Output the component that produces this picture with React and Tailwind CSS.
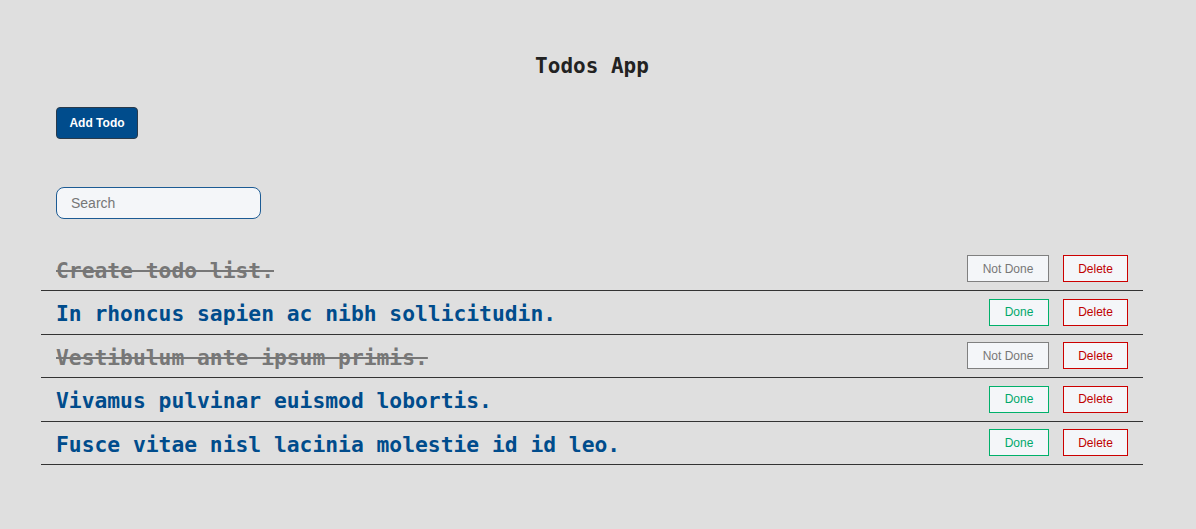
import React, { useState } from 'react';

const initialTodos = [
  { id: 1, text: 'Create todo list.', done: true },
  { id: 2, text: 'In rhoncus sapien ac nibh sollicitudin.', done: false },
  { id: 3, text: 'Vestibulum ante ipsum primis.', done: true },
  { id: 4, text: 'Vivamus pulvinar euismod lobortis.', done: false },
  { id: 5, text: 'Fusce vitae nisl lacinia molestie id id leo.', done: false },
];

const mono = { fontFamily: '"DejaVu Sans Mono", monospace' };
const sans = { fontFamily: '"Liberation Sans", Arial, sans-serif' };

const App = () => {
  const [todos, setTodos] = useState(initialTodos);
  const [search, setSearch] = useState('');

  const toggle = (id) =>
    setTodos(todos.map((t) => (t.id === id ? { ...t, done: !t.done } : t)));
  const remove = (id) => setTodos(todos.filter((t) => t.id !== id));

  const visible = todos.filter((t) =>
    t.text.toLowerCase().includes(search.toLowerCase())
  );

  return (
    <div className="min-h-[529px] bg-[#dfdfdf] pt-[50px]">
      <div className="ml-[41px] w-[1102px]">
        <h1 className="text-center text-[21px] leading-[32px] font-bold text-[#222]" style={mono}>
          Todos App
        </h1>

        <div className="px-[15px] mt-[25px]">
          <button
            className="h-[32px] w-[82px] rounded-[4px] border border-[#2a3a4a] bg-[#004c8c] text-white text-[12px] font-bold"
            style={sans}
          >
            Add Todo
          </button>
        </div>

        <div className="px-[15px] mt-[48px]">
          <input
            value={search}
            onChange={(e) => setSearch(e.target.value)}
            placeholder="Search"
            className="h-[32px] w-[205px] rounded-[8px] border border-[#1c5b94] bg-[#f4f6f9] px-[14px] text-[14px] text-[#333] placeholder:text-[#777] outline-none"
            style={sans}
          />
        </div>

        <ul className="mt-[28.5px]">
          {visible.map((todo) => (
            <li
              key={todo.id}
              className="flex h-[43.5px] items-center justify-between border-b border-[#333] pl-[15px] pr-[15px]"
            >
              <span
                className={
                  todo.done
                    ? 'mt-[4px] text-[21.3px] font-bold text-[#777] line-through'
                    : 'mt-[4px] text-[21.3px] font-bold text-[#004c8c]'
                }
                style={mono}
              >
                {todo.text}
              </span>
              <div className="flex items-center gap-[14px]" style={sans}>
                {todo.done ? (
                  <button
                    onClick={() => toggle(todo.id)}
                    className="h-[27px] w-[82px] border border-[#808080] bg-[#f4f6f9] text-[12px] text-[#777]"
                  >
                    Not Done
                  </button>
                ) : (
                  <button
                    onClick={() => toggle(todo.id)}
                    className="h-[27px] w-[60px] border border-[#00b06a] bg-[#f4f6f9] text-[12px] text-[#00a86b]"
                  >
                    Done
                  </button>
                )}
                <button
                  onClick={() => remove(todo.id)}
                  className="h-[27px] w-[65px] border border-[#cc0000] bg-[#f4f6f9] text-[12px] text-[#c00000]"
                >
                  Delete
                </button>
              </div>
            </li>
          ))}
        </ul>
      </div>
    </div>
  );
};

export default App;
